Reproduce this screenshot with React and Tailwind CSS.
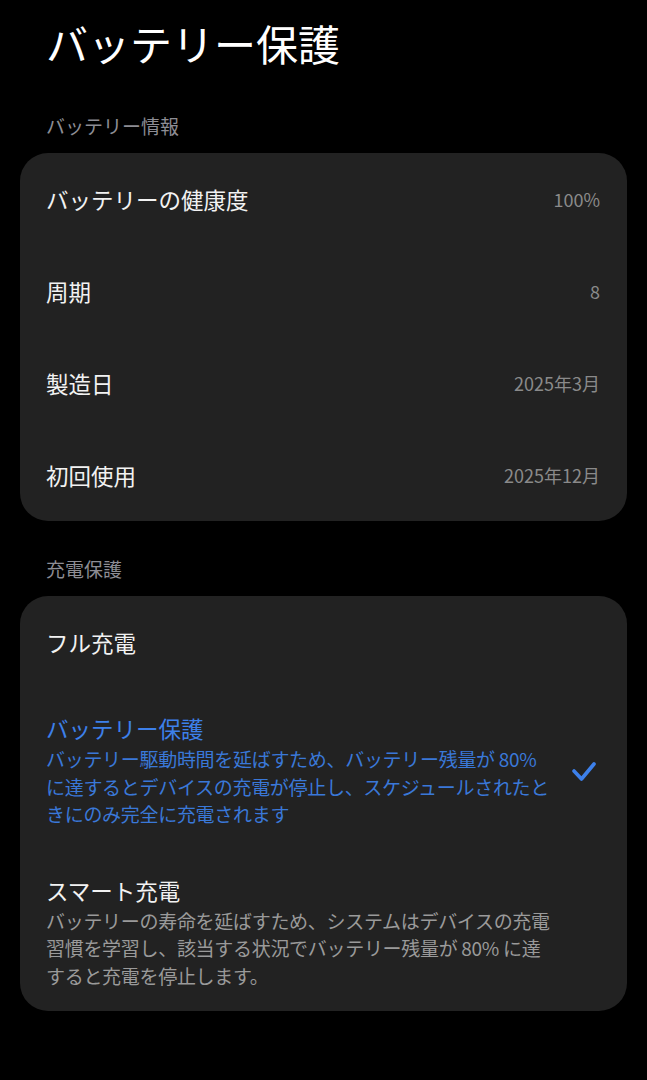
const FONT = { fontFamily: '"Noto Sans CJK JP", "Noto Sans", sans-serif' }

const INFO = [
  { label: 'バッテリーの健康度', value: '100%' },
  { label: '周期', value: '8' },
  { label: '製造日', value: '2025年3月' },
  { label: '初回使用', value: '2025年12月' },
]

function Check() {
  return (
    <svg width="26" height="22" viewBox="0 0 26 22" fill="none" className="shrink-0">
      <polyline
        points="3,11 10.5,19 23,4"
        stroke="#3d80ea"
        strokeWidth="3.6"
        strokeLinecap="round"
        strokeLinejoin="round"
      />
    </svg>
  )
}

function SectionLabel({ children, className = '' }) {
  return (
    <div className={`px-[46px] text-[19px] leading-[26px] text-[#8d8d94] ${className}`}>{children}</div>
  )
}

function Option({ title, lines, active }) {
  return (
    <div className="flex items-center pl-[26px] pr-[30px] pt-[26px] pb-[22px]">
      <div className="w-[520px]">
        <div className={`text-[22.5px] leading-[28px] ${active ? 'text-[#3d80ea]' : 'text-[#f2f2f2]'}`}>{title}</div>
        <div className={`mt-[3px] text-[19px] leading-[27.5px] tracking-[-0.3px] ${active ? 'text-[#3a78d8]' : 'text-[#9a9a9a]'}`}>
          {lines.map((l) => (
            <div key={l} className="whitespace-nowrap">{l}</div>
          ))}
        </div>
      </div>
      <div className="flex-1 flex justify-end">{active && <Check />}</div>
    </div>
  )
}

export default function App() {
  return (
    <div className="min-h-[1080px] w-[647px] bg-black pt-[18px]" style={FONT}>
      {/* Header */}
      <h1 className="px-[46px] text-[42px] leading-[50px] text-white font-normal">バッテリー保護</h1>

      {/* Battery info */}
      <SectionLabel className="mt-[45px]">バッテリー情報</SectionLabel>
      <div className="mx-[20px] mt-[14px] rounded-[28px] bg-[#222222]">
        {INFO.map((row) => (
          <div key={row.label} className="flex h-[92px] items-center justify-between pl-[26px] pr-[27px]">
            <span className="text-[22.5px] leading-[28px] text-[#f2f2f2]">{row.label}</span>
            <span className="text-[18px] leading-[24px] text-[#8a8a8a]">{row.value}</span>
          </div>
        ))}
      </div>

      {/* Charging protection */}
      <SectionLabel className="mt-[35px]">充電保護</SectionLabel>
      <div className="mx-[20px] mt-[14px] rounded-[28px] bg-[#222222]">
        <div className="flex h-[92px] items-center pl-[26px]">
          <span className="text-[22.5px] leading-[28px] text-[#f2f2f2]">フル充電</span>
        </div>
        <Option
          active
          title="バッテリー保護"
          lines={[
            'バッテリー駆動時間を延ばすため、バッテリー残量が 80%',
            'に達するとデバイスの充電が停止し、スケジュールされたと',
            'きにのみ完全に充電されます',
          ]}
        />
        <Option
          title="スマート充電"
          lines={[
            'バッテリーの寿命を延ばすため、システムはデバイスの充電',
            '習慣を学習し、該当する状況でバッテリー残量が 80% に達',
            'すると充電を停止します。',
          ]}
        />
      </div>
    </div>
  )
}
